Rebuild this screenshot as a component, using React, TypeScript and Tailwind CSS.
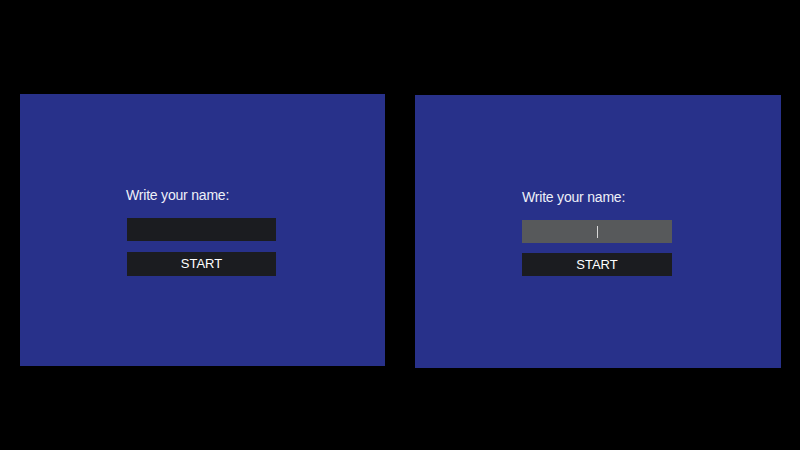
import React from "react";

function Panel({ active }: { active?: boolean }) {
  return (
    <div
      className={
        active
          ? "w-[366px] h-[273px] bg-[#28318a] flex flex-col pl-[107px] pt-[93px]"
          : "w-[365px] h-[272px] bg-[#28318a] flex flex-col pl-[106px] pt-[92px]"
      }
    >
      <div className="text-[14px] leading-[18px] text-[#eef0f8] font-['Liberation_Sans',sans-serif] tracking-[-0.2px]">
        Write your name:
      </div>
      {active ? (
        <div className="mt-[14px] w-[150px] h-[23px] bg-[#57595b] flex items-center justify-center">
          <div className="w-[1px] h-[12px] bg-[#d8d8d8]" />
        </div>
      ) : (
        <div className="mt-[14px] ml-[1px] w-[149px] h-[23px] bg-[#1b1c20]" />
      )}
      <div
        className={
          active
            ? "mt-[10px] w-[150px] h-[23px] bg-[#1b1c20] flex items-center justify-center text-[13px] text-white font-['Liberation_Sans',sans-serif]"
            : "mt-[11px] ml-[1px] w-[149px] h-[24px] bg-[#1b1c20] flex items-center justify-center text-[13px] text-white font-['Liberation_Sans',sans-serif]"
        }
      >
        START
      </div>
    </div>
  );
}

export default function App() {
  return (
    <div className="w-[800px] h-[450px] bg-black flex items-start pl-[20px] pt-[94px] gap-[30px]">
      <Panel />
      <div className="pt-[1px]">
        <Panel active />
      </div>
    </div>
  );
}
